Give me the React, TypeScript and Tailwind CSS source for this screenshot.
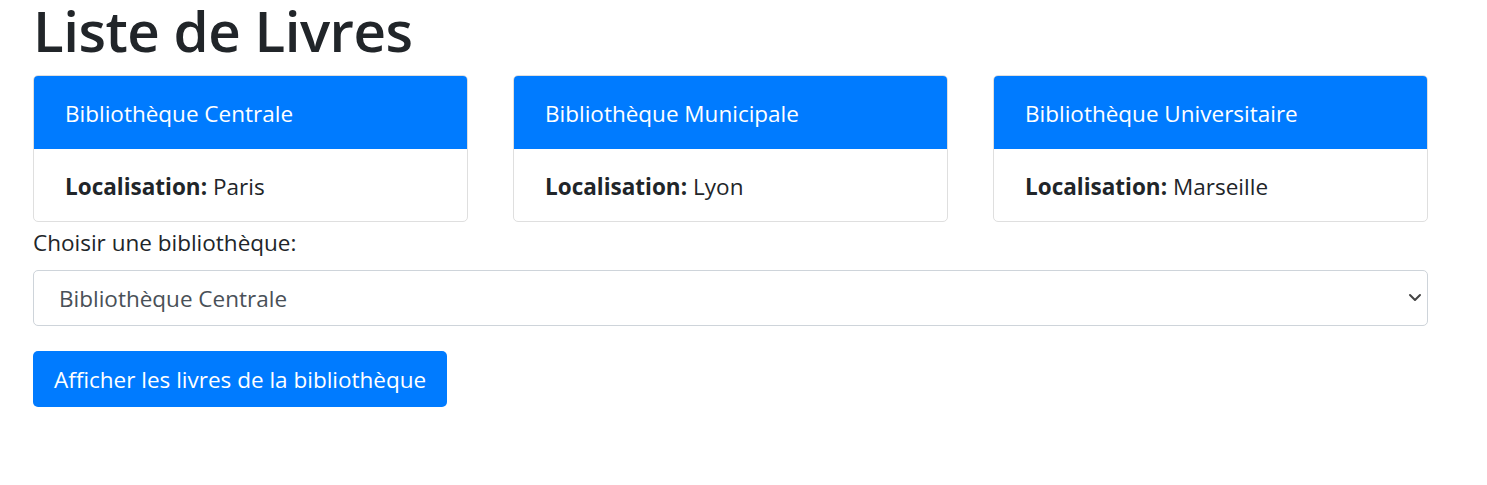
import React from 'react';

const libraries = [
  { name: 'Bibliothèque Centrale', city: 'Paris' },
  { name: 'Bibliothèque Municipale', city: 'Lyon' },
  { name: 'Bibliothèque Universitaire', city: 'Marseille' },
];

const font = "font-['Open_Sans','Noto_Sans',sans-serif]";

const App: React.FC = () => {
  return (
    <div className={`min-h-screen bg-white px-[33px] text-[#212529] ${font}`}>
      <div className="w-[1395px]">
        <h1 className="mb-[14px] text-[56.5px] font-semibold leading-[61px] tracking-[-0.5px]">Liste de Livres</h1>

        {/* cartes des bibliothèques */}
        <div className="grid grid-cols-3 gap-[45px]">
          {libraries.map((lib) => (
            <div key={lib.name} className="overflow-hidden rounded-[5px] border border-[#dfdfdf]">
              <div className="flex h-[73px] items-center bg-[#007bff] px-[31px] pt-[2px] text-[22.5px] text-white">
                {lib.name}
              </div>
              <div className="flex h-[72px] items-center px-[31px] pt-[3px] text-[22.5px]">
                <span className="mr-[6px] font-bold">Localisation:</span>
                {lib.city}
              </div>
            </div>
          ))}
        </div>

        <label className="block pt-[6px] text-[22.5px] leading-[30px]">Choisir une bibliothèque:</label>

        <div className="relative mt-[12px]">
          <div className="flex h-[56px] items-center rounded-[5px] border border-[#ced4da] px-[25px] pt-[2px] text-[22.5px] text-[#495057]">
            Bibliothèque Centrale
          </div>
          <svg
            className="absolute right-[6px] top-[22px]"
            width="14"
            height="10"
            viewBox="0 0 14 10"
            fill="none"
          >
            <path d="M2 3l5 5 5-5" stroke="#444" strokeWidth="2" strokeLinecap="round" strokeLinejoin="round" />
          </svg>
        </div>

        <button className="mt-[25px] flex h-[56px] items-center rounded-[5px] bg-[#007bff] px-[21px] pt-[2px] text-[22.5px] text-white">
          Afficher les livres de la bibliothèque
        </button>
      </div>
    </div>
  );
};

export default App;
